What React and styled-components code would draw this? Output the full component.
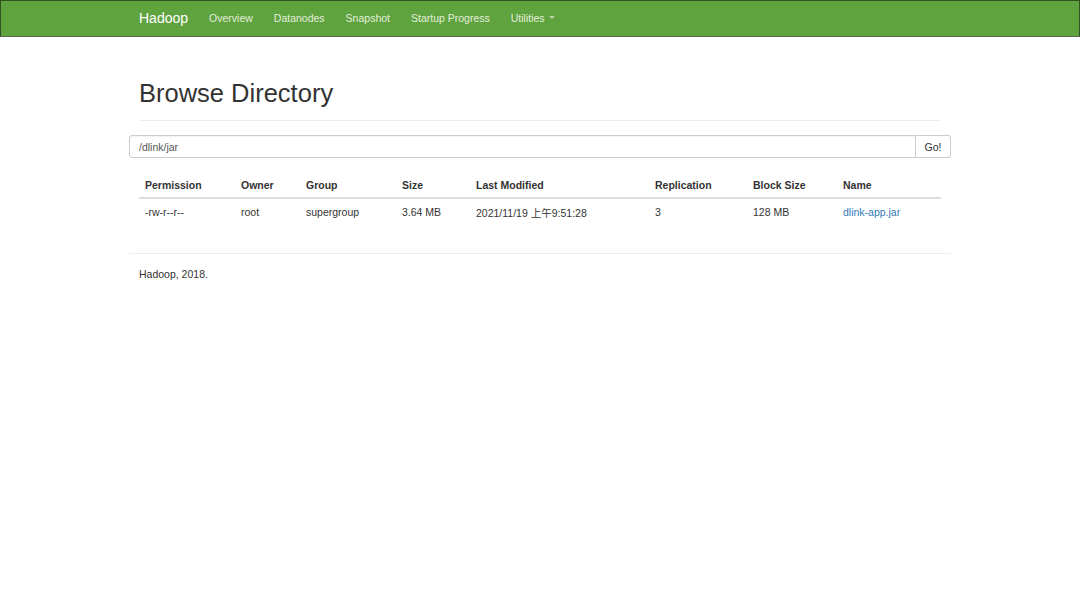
import styled, { createGlobalStyle } from "styled-components";

const GlobalStyle = createGlobalStyle`
    body {
        margin: 0;
        background: #fff;
        color: #333;
        font-family: "Liberation Sans", "Noto Sans CJK SC", sans-serif;
        font-size: 10.5px;
    }
`

const columns = [
    { key: "permission", label: "Permission", width: 96 },
    { key: "owner", label: "Owner", width: 65 },
    { key: "group", label: "Group", width: 96 },
    { key: "size", label: "Size", width: 74 },
    { key: "modified", label: "Last Modified", width: 179 },
    { key: "replication", label: "Replication", width: 98 },
    { key: "blockSize", label: "Block Size", width: 90 },
    { key: "name", label: "Name", width: 104 },
]

const files = [
    {
        permission: "-rw-r--r--",
        owner: "root",
        group: "supergroup",
        size: "3.64 MB",
        modified: "2021/11/19 上午9:51:28",
        replication: "3",
        blockSize: "128 MB",
        name: "dlink-app.jar",
    },
]

const navLinks = ["Overview", "Datanodes", "Snapshot", "Startup Progress"]

export default function App() {
    return (
        <>
            <GlobalStyle />
            <Navbar>
                <NavInner>
                    <Brand>Hadoop</Brand>
                    {navLinks.map((link) => (
                        <NavLink key={link}>{link}</NavLink>
                    ))}
                    <NavLink>
                        Utilities <Caret />
                    </NavLink>
                </NavInner>
            </Navbar>
            <Container>
                <PageHeader>
                    <Title>Browse Directory</Title>
                </PageHeader>
                <InputGroup>
                    <PathInput defaultValue="/dlink/jar" />
                    <GoButton>Go!</GoButton>
                </InputGroup>
                <TableWrap>
                    <Table>
                        <colgroup>
                            {columns.map((col) => (
                                <col key={col.key} style={{ width: col.width }} />
                            ))}
                        </colgroup>
                        <thead>
                            <tr>
                                {columns.map((col) => (
                                    <Th key={col.key}>{col.label}</Th>
                                ))}
                            </tr>
                        </thead>
                        <tbody>
                            {files.map((file) => (
                                <tr key={file.name}>
                                    {columns.map((col) => (
                                        <Td key={col.key}>
                                            {col.key === "name" ? (
                                                <FileLink href="#">{file.name}</FileLink>
                                            ) : (
                                                file[col.key]
                                            )}
                                        </Td>
                                    ))}
                                </tr>
                            ))}
                        </tbody>
                    </Table>
                </TableWrap>
                <Rule />
                <Footer>Hadoop, 2018.</Footer>
            </Container>
        </>
    )
}

const Navbar = styled.div`
    background: #5fa33f;
    border: 1px solid #30531f;
    border-bottom-color: #5a6b52;
    box-sizing: border-box;
    height: 37px;
`

const NavInner = styled.div`
    width: 822px;
    margin: 0 auto;
    height: 100%;
    display: flex;
    align-items: center;
    padding: 0 0 2px 10px;
    box-sizing: border-box;
`

const Brand = styled.span`
    color: #fff;
    font-size: 14px;
    padding-right: 10.5px;
`

const NavLink = styled.span`
    color: #e3eedc;
    font-size: 10.5px;
    padding: 0 10.5px;
    display: flex;
    align-items: center;
`

const Caret = styled.span`
    display: inline-block;
    width: 0;
    height: 0;
    margin-left: 4px;
    border-top: 3px solid #b9d6a9;
    border-left: 3px solid transparent;
    border-right: 3px solid transparent;
`

const Container = styled.div`
    width: 822px;
    margin: 0 auto;
`

const PageHeader = styled.div`
    margin: 42px 10px 14px;
    padding-bottom: 13px;
    border-bottom: 1px solid #eee;
`

const Title = styled.h1`
    margin: 0;
    font-family: "Liberation Sans", Arial, sans-serif;
    font-size: 25.5px;
    font-weight: normal;
    line-height: 28px;
    color: #333;
`

const InputGroup = styled.div`
    display: flex;
    height: 23px;
`

const PathInput = styled.input`
    flex: 1;
    height: 23px;
    box-sizing: border-box;
    border: 1px solid #ccc;
    border-radius: 3px 0 0 3px;
    padding: 0 9px;
    font-family: inherit;
    font-size: 10.5px;
    color: #555;
    outline: none;
    box-shadow: inset 0 1px 1px rgba(0, 0, 0, 0.05);
`

const GoButton = styled.button`
    width: 35px;
    height: 23px;
    box-sizing: border-box;
    border: 1px solid #ccc;
    border-left: none;
    border-radius: 0 3px 3px 0;
    background: #fff;
    color: #333;
    font-family: inherit;
    font-size: 10.5px;
    padding: 0;
`

const TableWrap = styled.div`
    padding: 14px 10px 0;
`

const Table = styled.table`
    width: 802px;
    border-collapse: collapse;
    table-layout: fixed;
`

const Th = styled.th`
    text-align: left;
    font-weight: bold;
    height: 25px;
    padding: 0 6px;
    border-bottom: 2px solid #ddd;
    vertical-align: middle;
`

const Td = styled.td`
    height: 26px;
    padding: 0 6px;
    vertical-align: middle;
`

const FileLink = styled.a`
    color: #337ab7;
    text-decoration: none;
`

const Rule = styled.hr`
    margin: 28px 0 13px;
    border: 0;
    border-top: 1px solid #eee;
`

const Footer = styled.div`
    padding-left: 10px;
    line-height: 15px;
`
